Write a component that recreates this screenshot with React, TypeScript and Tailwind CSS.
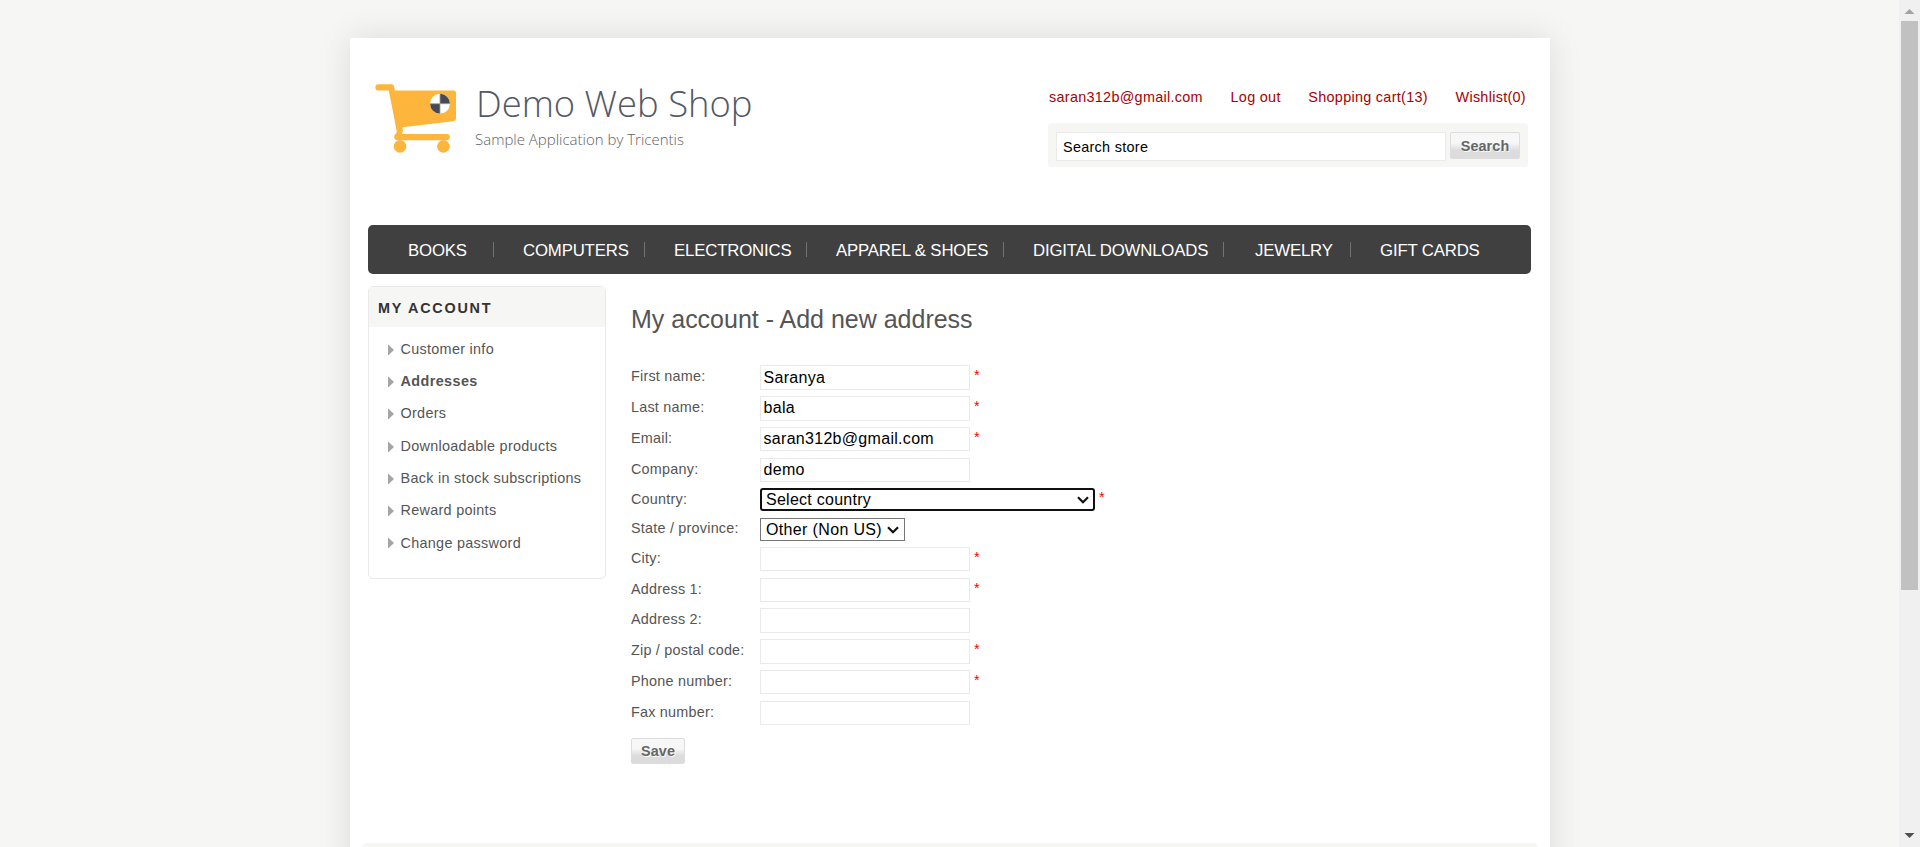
import React from "react";

type Field = {
  label: string;
  value?: string;
  required?: boolean;
  row: string;
  box?: string;
  select?: string;
};

const navItems = [
  { name: "BOOKS", cls: "w-[126px] pl-[40px]" },
  { name: "COMPUTERS", cls: "w-[151px] pl-[29px]" },
  { name: "ELECTRONICS", cls: "w-[162px] pl-[29px]" },
  { name: "APPAREL & SHOES", cls: "w-[197px] pl-[29px]" },
  { name: "DIGITAL DOWNLOADS", cls: "w-[220px] pl-[29px]" },
  { name: "JEWELRY", cls: "w-[127px] pl-[31px]" },
  { name: "GIFT CARDS", cls: "pl-[29px]" },
];

const accountLinks = [
  "Customer info",
  "Addresses",
  "Orders",
  "Downloadable products",
  "Back in stock subscriptions",
  "Reward points",
  "Change password",
];

const fields: Field[] = [
  { label: "First name:", value: "Saranya", required: true, row: "h-[31px]", box: "h-[25px]" },
  { label: "Last name:", value: "bala", required: true, row: "h-[31px]", box: "h-[25px] pb-0.5" },
  { label: "Email:", value: "saran312b@gmail.com", required: true, row: "h-[31px]", box: "h-[24px]" },
  { label: "Company:", value: "demo", row: "h-[30px]", box: "h-[24px]" },
  { label: "Country:", value: "Select country", required: true, row: "h-[30px]", select: "country" },
  { label: "State / province:", value: "Other (Non US)", row: "h-[29px]", select: "state" },
  { label: "City:", required: true, row: "h-[31px]", box: "h-[24px]" },
  { label: "Address 1:", required: true, row: "h-[30px]", box: "h-[24px]" },
  { label: "Address 2:", row: "h-[31px]", box: "h-[25px]" },
  { label: "Zip / postal code:", required: true, row: "h-[31px]", box: "h-[25px]" },
  { label: "Phone number:", required: true, row: "h-[31px]", box: "h-[24px]" },
  { label: "Fax number:", row: "h-[37px]", box: "h-[24px]" },
];

function Logo() {
  return (
    <div className="flex">
      <svg width="107" height="80" viewBox="368 78 107 80" fill="#fdb53c">
        <path d="M378.5 84.2H391.5Q393.6 84.2 394 86.3L394.9 90.6H453.5Q456 90.6 456 93.2V118.5Q456 120.9 453.5 121.2L402.4 127.3Q403.6 131 402 134H447Q449.8 134 449.8 137T447 140.2H397.5Q394.2 140.2 394.2 137Q394.2 134.6 396.8 132.2L396.3 129L388.8 90.6H378.5Q375.4 90.6 375.4 87.4T378.5 84.2Z" />
        <circle cx="400" cy="146.4" r="6.3" />
        <circle cx="443.4" cy="146.4" r="6.3" />
        <circle cx="440" cy="103.7" r="9.9" fill="#fff" />
        <path d="M440 103.7V93.8A9.9 9.9 0 0 1 449.9 103.7ZM440 103.7V113.6A9.9 9.9 0 0 1 430.1 103.7Z" fill="#454b56" />
        <path d="M430.1 103.7H449.9M440 93.8V113.6" stroke="#a79c88" strokeWidth="0.8" />
      </svg>
      <div className="font-['Open_Sans',sans-serif] font-light whitespace-nowrap">
        <div className="pl-px text-[36.4px] leading-[50px] text-[#545965]">Demo Web Shop</div>
        <div className="pt-px text-[15px] leading-5 text-[#5d616b]">Sample Application by Tricentis</div>
      </div>
    </div>
  );
}

function Button({ children, className }: { children: React.ReactNode; className: string }) {
  return (
    <button
      className={`rounded-[2px] border border-[#dddddd] bg-linear-to-b from-[#f7f7f7] from-40% to-[#dcdcdc] to-70% text-center text-[14.4px] font-bold tracking-[0.1px] text-[#666] [text-shadow:1px_1px_1px_#fff] ${className}`}
    >
      {children}
    </button>
  );
}

function Chevron() {
  return (
    <svg className="shrink-0" width="12" height="8" viewBox="0 0 12 8" fill="none" stroke="#101010" strokeWidth="2.2">
      <path d="M1 1.2L6 6.2L11 1.2" />
    </svg>
  );
}

function Control({ field }: { field: Field }) {
  if (field.select) {
    const frame =
      field.select === "country"
        ? "w-[335px] border-2 border-[#101010] rounded-[3px] pl-[4px] pr-[4px] tracking-[0.26px]"
        : "w-[145px] border border-[#767676] pl-[5px] pr-[5px] tracking-[0.35px]";
    return (
      <div className={`flex h-[23px] items-center justify-between bg-white text-base leading-[21px] text-black ${frame}`}>
        <span>{field.value}</span>
        <Chevron />
      </div>
    );
  }
  return (
    <input
      className={`w-[210px] border border-[#eaeaea] bg-white pl-[2.5px] text-base tracking-[0.3px] text-black outline-none ${field.box}`}
      defaultValue={field.value}
    />
  );
}

export default function App() {
  return (
    <div className="flex h-[847px] w-[1920px] overflow-hidden bg-[#f6f6f4] font-['Liberation_Sans',Arial,sans-serif] text-[14.4px] text-[#555]">
      <div className="flex w-[1899px] justify-center pt-[38px] pl-px">
        <div className="h-[900px] w-[1200px] bg-white shadow-[0_0_32px_rgba(0,0,0,0.11)]">
          <header className="flex h-[187px] justify-between pr-[22px] pl-[18px]">
            <div className="pt-10">
              <Logo />
            </div>
            <div className="w-[480px] pt-[49px]">
              <div className="flex h-9 justify-between pr-0.5 pl-px leading-5 tracking-[0.3px] whitespace-nowrap text-[#a90000]">
                <a>saran312b@gmail.com</a>
                <a>Log out</a>
                <a>Shopping cart(13)</a>
                <a>Wishlist(0)</a>
              </div>
              <div className="flex h-11 gap-1 rounded bg-[#f6f6f5] pt-[9px] pl-2">
                <input
                  className="h-[29px] w-[390px] border border-[#eaeaea] bg-white px-[6px] text-[14.4px] tracking-[0.3px] text-black outline-none"
                  defaultValue="Search store"
                />
                <Button className="h-[27px] w-[70px] pt-px leading-[25px]">Search</Button>
              </div>
            </div>
          </header>

          <nav className="mx-[18px] flex h-[49px] w-[1163px] items-center rounded-[5px] bg-[#404040] text-[16.8px] tracking-[-0.17px] whitespace-nowrap text-white">
            {navItems.map((item, i) => (
              <div
                key={item.name}
                className={`h-[15px] leading-[17px] ${item.cls} ${i < navItems.length - 1 ? "border-r border-[#737373]" : ""}`}
              >
                {item.name}
              </div>
            ))}
          </nav>

          <div className="flex pt-3 pl-[18px]">
            <aside className="h-[293px] w-[238px] rounded-[5px] border border-[#eaeaea]">
              <div className="h-10 bg-[#f6f6f5] pl-[9px] leading-[43px] font-bold tracking-[1.75px] text-[#333]">
                MY ACCOUNT
              </div>
              <ul className="pt-[6.5px] pl-[18.5px]">
                {accountLinks.map((link) => (
                  <li key={link} className="flex h-[32.3px] items-center gap-[7px] tracking-[0.3px]">
                    <svg width="6" height="12" viewBox="0 0 6 12" fill="#a5a5a5">
                      <path d="M0 0.5L6 6L0 11.5Z" />
                    </svg>
                    <span className={link === "Addresses" ? "font-bold tracking-[0.4px]" : ""}>{link}</span>
                  </li>
                ))}
              </ul>
            </aside>

            <main className="pl-[25px]">
              <h1 className="pt-[17px] text-[25px] leading-8 tracking-[-0.01px]">My account - Add new address</h1>
              <form className="pt-[30px]">
                {fields.map((field) => (
                  <div key={field.label} className={`flex items-start ${field.row}`}>
                    <label
                      className={`w-[129px] leading-5 tracking-[0.22px] whitespace-nowrap ${field.select === "state" ? "" : "pt-px"}`}
                    >
                      {field.label}
                    </label>
                    <Control field={field} />
                    {field.required && (
                      <span className={`pl-1 text-[#f00] ${field.select ? "leading-[18px]" : "leading-5"}`}>*</span>
                    )}
                  </div>
                ))}
                <Button className="block h-[26px] w-[54px] leading-6">Save</Button>
              </form>
            </main>
          </div>
          <footer className="mt-[79px] ml-3 h-20 w-[1176px] rounded-[5px] bg-[#f6f6f4]" />
        </div>
      </div>

      <div className="flex h-[847px] w-[21px] flex-col items-center bg-[#f0f0f0]">
        <svg className="shrink-0" width="21" height="21" viewBox="0 0 21 21" fill="#a3a3a3">
          <path d="M5.5 14L10.5 9L15.5 14Z" />
        </svg>
        <div className="h-[569px] w-[17px] bg-[#c1c1c1]" />
        <svg className="mt-auto shrink-0" width="21" height="21" viewBox="0 0 21 21" fill="#505050">
          <path d="M5.5 7L10.5 12L15.5 7Z" />
        </svg>
      </div>
    </div>
  );
}
